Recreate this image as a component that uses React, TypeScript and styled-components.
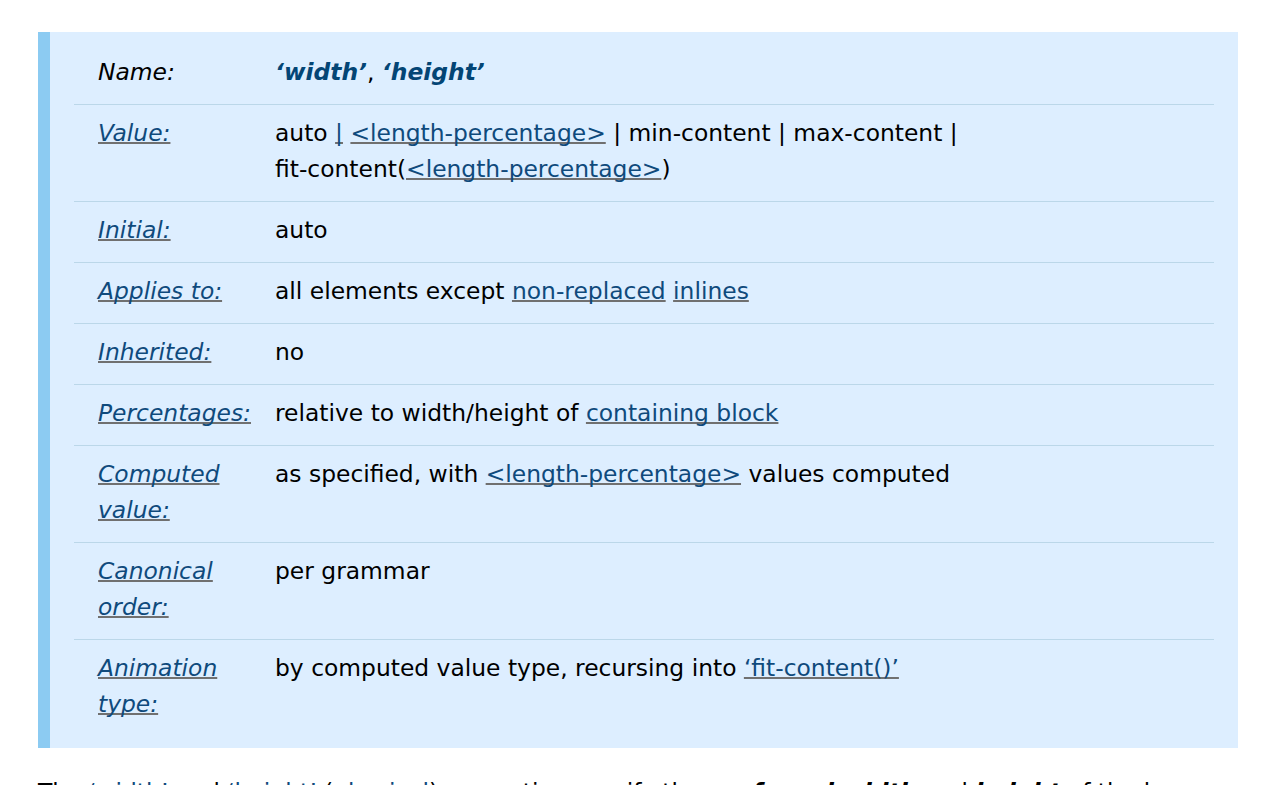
import React from "react";
import styled, { createGlobalStyle } from "styled-components";

const GlobalStyle = createGlobalStyle`
  html, body {
    margin: 0;
    padding: 0;
    background: #ffffff;
  }
  body {
    font-family: "DejaVu Sans", Verdana, sans-serif;
    font-size: 23.4px;
    line-height: 36px;
    color: #000000;
  }
`;

const Page = styled.main`
  padding: 32px 36px 0 38px;
`;

const PropDef = styled.section`
  background: #ddeeff;
  border-left: 12px solid #8ccbf2;
  padding: 12px 24px;
`;

const Row = styled.div`
  display: grid;
  grid-template-columns: 165px 1fr;
  column-gap: 12px;
  padding: 10px 24px 14px;
  & + & {
    border-top: 1px solid #bbd7e9;
  }
`;

const Label = styled.div`
  font-style: italic;
`;

const Value = styled.div``;

const Link = styled.a`
  color: #0f4a7c;
  text-decoration: underline;
  text-decoration-color: #707070;
  text-decoration-thickness: 2px;
  text-decoration-skip-ink: none;
  cursor: pointer;
`;

const PropName = styled.a`
  color: #034575;
  font-weight: bold;
  font-style: italic;
  text-decoration: none;
`;

const NoWrap = styled.span`
  white-space: nowrap;
`;

const Para = styled.p`
  margin: 26px 0 0 0;
`;

const Dfn = styled.strong`
  font-style: italic;
  font-weight: bold;
`;

const rows: { label: string; link: boolean; value: React.ReactNode }[] = [
  {
    label: "Name:",
    link: false,
    value: (
      <>
        <PropName>‘width’</PropName>, <PropName>‘height’</PropName>
      </>
    ),
  },
  {
    label: "Value:",
    link: true,
    value: (
      <>
        auto <Link>|</Link> <Link>&lt;length-percentage&gt;</Link> | min-content | max-content |{" "}
        <NoWrap>
          fit-content(<Link>&lt;length-percentage&gt;</Link>)
        </NoWrap>
      </>
    ),
  },
  { label: "Initial:", link: true, value: "auto" },
  {
    label: "Applies to:",
    link: true,
    value: (
      <>
        all elements except <Link>non-replaced</Link> <Link>inlines</Link>
      </>
    ),
  },
  { label: "Inherited:", link: true, value: "no" },
  {
    label: "Percentages:",
    link: true,
    value: (
      <>
        relative to width/height of <Link>containing block</Link>
      </>
    ),
  },
  {
    label: "Computed value:",
    link: true,
    value: (
      <>
        as specified, with <Link>&lt;length-percentage&gt;</Link> values computed
      </>
    ),
  },
  { label: "Canonical order:", link: true, value: "per grammar" },
  {
    label: "Animation type:",
    link: true,
    value: (
      <>
        by computed value type, recursing into <Link>‘fit-content()’</Link>
      </>
    ),
  },
];

export default function App() {
  return (
    <>
      <GlobalStyle />
      <Page>
        <PropDef>
          {rows.map((r) => (
            <Row key={r.label}>
              <Label>{r.link ? <Link>{r.label}</Link> : r.label}</Label>
              <Value>{r.value}</Value>
            </Row>
          ))}
        </PropDef>
        <Para>
          The <Link>‘width’</Link> and <Link>‘height’</Link> (<Link>physical</Link>) properties specify the{" "}
          <Dfn>preferred width</Dfn> and <Dfn>height</Dfn> of the box, respectively.
        </Para>
      </Page>
    </>
  );
}
